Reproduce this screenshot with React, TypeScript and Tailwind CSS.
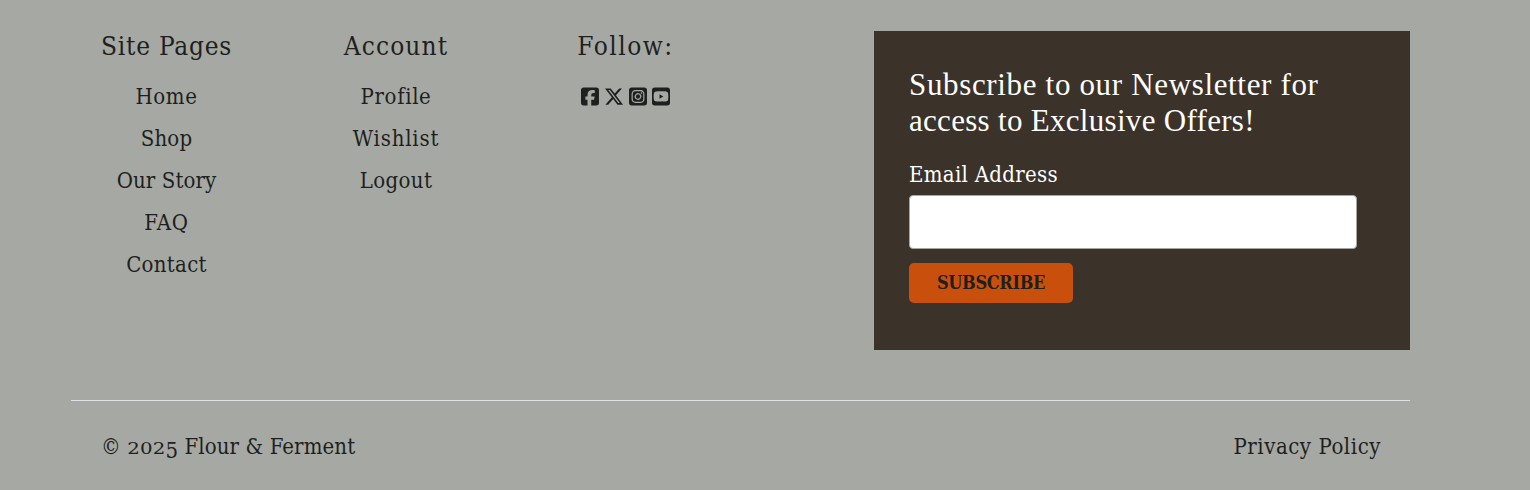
import type { ReactNode } from "react";
import { FaSquareFacebook, FaXTwitter, FaSquareInstagram, FaSquareYoutube } from "react-icons/fa6";

function Heading({ children, className }: { children: ReactNode; className: string }) {
  return <h5 className={`h-[34px] whitespace-nowrap text-[26px] leading-[30px] ${className}`}>{children}</h5>;
}

const pages = [
  { label: "Home", cls: "tracking-[0.6px]" },
  { label: "Shop", cls: "tracking-[0.2px]" },
  { label: "Our Story", cls: "tracking-[0.1px]" },
  { label: "FAQ", cls: "tracking-[0.7px]" },
  { label: "Contact", cls: "tracking-[0.3px]" },
];

const account = [
  { label: "Profile", cls: "tracking-[0.65px]" },
  { label: "Wishlist", cls: "tracking-[0.8px]" },
  { label: "Logout", cls: "tracking-[0.4px]" },
];

function Links({ items }: { items: { label: string; cls: string }[] }) {
  return (
    <ul className="mt-[11px] flex flex-col items-center">
      {items.map((item) => (
        <li key={item.label} className="h-[42px] whitespace-nowrap text-[22px] leading-[42px]">
          <a href="#" className={item.cls}>{item.label}</a>
        </li>
      ))}
    </ul>
  );
}

export default function App() {
  return (
    <footer className="h-[490px] overflow-hidden bg-[#a6a9a3] pl-[71px] pr-[120px] pt-[31px] font-['DejaVu_Serif_Condensed','DejaVu_Serif',serif] text-[#1e1f1e] [font-stretch:condensed]">
      <div className="flex h-[319px]">
        <nav className="ml-[30px] flex w-[131px] flex-col items-center">
          <Heading className="tracking-[0.75px]">Site Pages</Heading>
          <Links items={pages} />
        </nav>
        <nav className="ml-[111px] flex w-[106px] flex-col items-center">
          <Heading className="tracking-[1.1px]">Account</Heading>
          <Links items={account} />
        </nav>
        <div className="ml-[128px] flex w-[97px] flex-col items-center">
          <Heading className="tracking-[1.5px]">Follow:</Heading>
          <div className="mt-[21px] flex items-center gap-[5px] text-[21px]">
            <FaSquareFacebook className="w-[18px]" />
            <FaXTwitter className="w-[20px]" />
            <FaSquareInstagram className="w-[18px]" />
            <FaSquareYoutube className="w-[18px]" />
          </div>
        </div>
        <form className="ml-auto w-[536px] bg-[#3b322a] pl-[35px] pt-[36px] text-white">
          <h4 className="whitespace-nowrap font-['Liberation_Serif',serif] text-[31px] leading-[36px]">
            <span className="block tracking-[0.66px]">Subscribe to our Newsletter for</span>
            <span className="block tracking-[0.3px]">access to Exclusive Offers!</span>
          </h4>
          <label htmlFor="email" className="mt-[20px] block h-[32px] text-[22px] leading-[32px] tracking-[0.3px]">
            Email Address
          </label>
          <input id="email" type="email" className="mt-[4px] block h-[54px] w-[448px] rounded-[4px] border border-[#a5a8a2] bg-white" />
          <button type="button" className="mt-[14px] block h-[40px] w-[164px] rounded-[5px] bg-[#c8500c] text-[18px] font-bold leading-[40px] tracking-[-0.35px] text-[#1e1f1e]">
            SUBSCRIBE
          </button>
        </form>
      </div>
      <div className="mt-[50px] flex h-[90px] items-center justify-between border-t border-[#dee2e6] pl-[30px] pr-[29px] pt-[2px] text-[22px]">
        <p className="whitespace-nowrap tracking-[0.1px]">
          © <span className="inline-block origin-[50%_85%] scale-y-[0.75] leading-none">202</span>
          <span className="relative top-[4px]">5</span> Flour &amp; Ferment
        </p>
        <a href="#" className="whitespace-nowrap tracking-[0.55px]">Privacy Policy</a>
      </div>
    </footer>
  );
}
